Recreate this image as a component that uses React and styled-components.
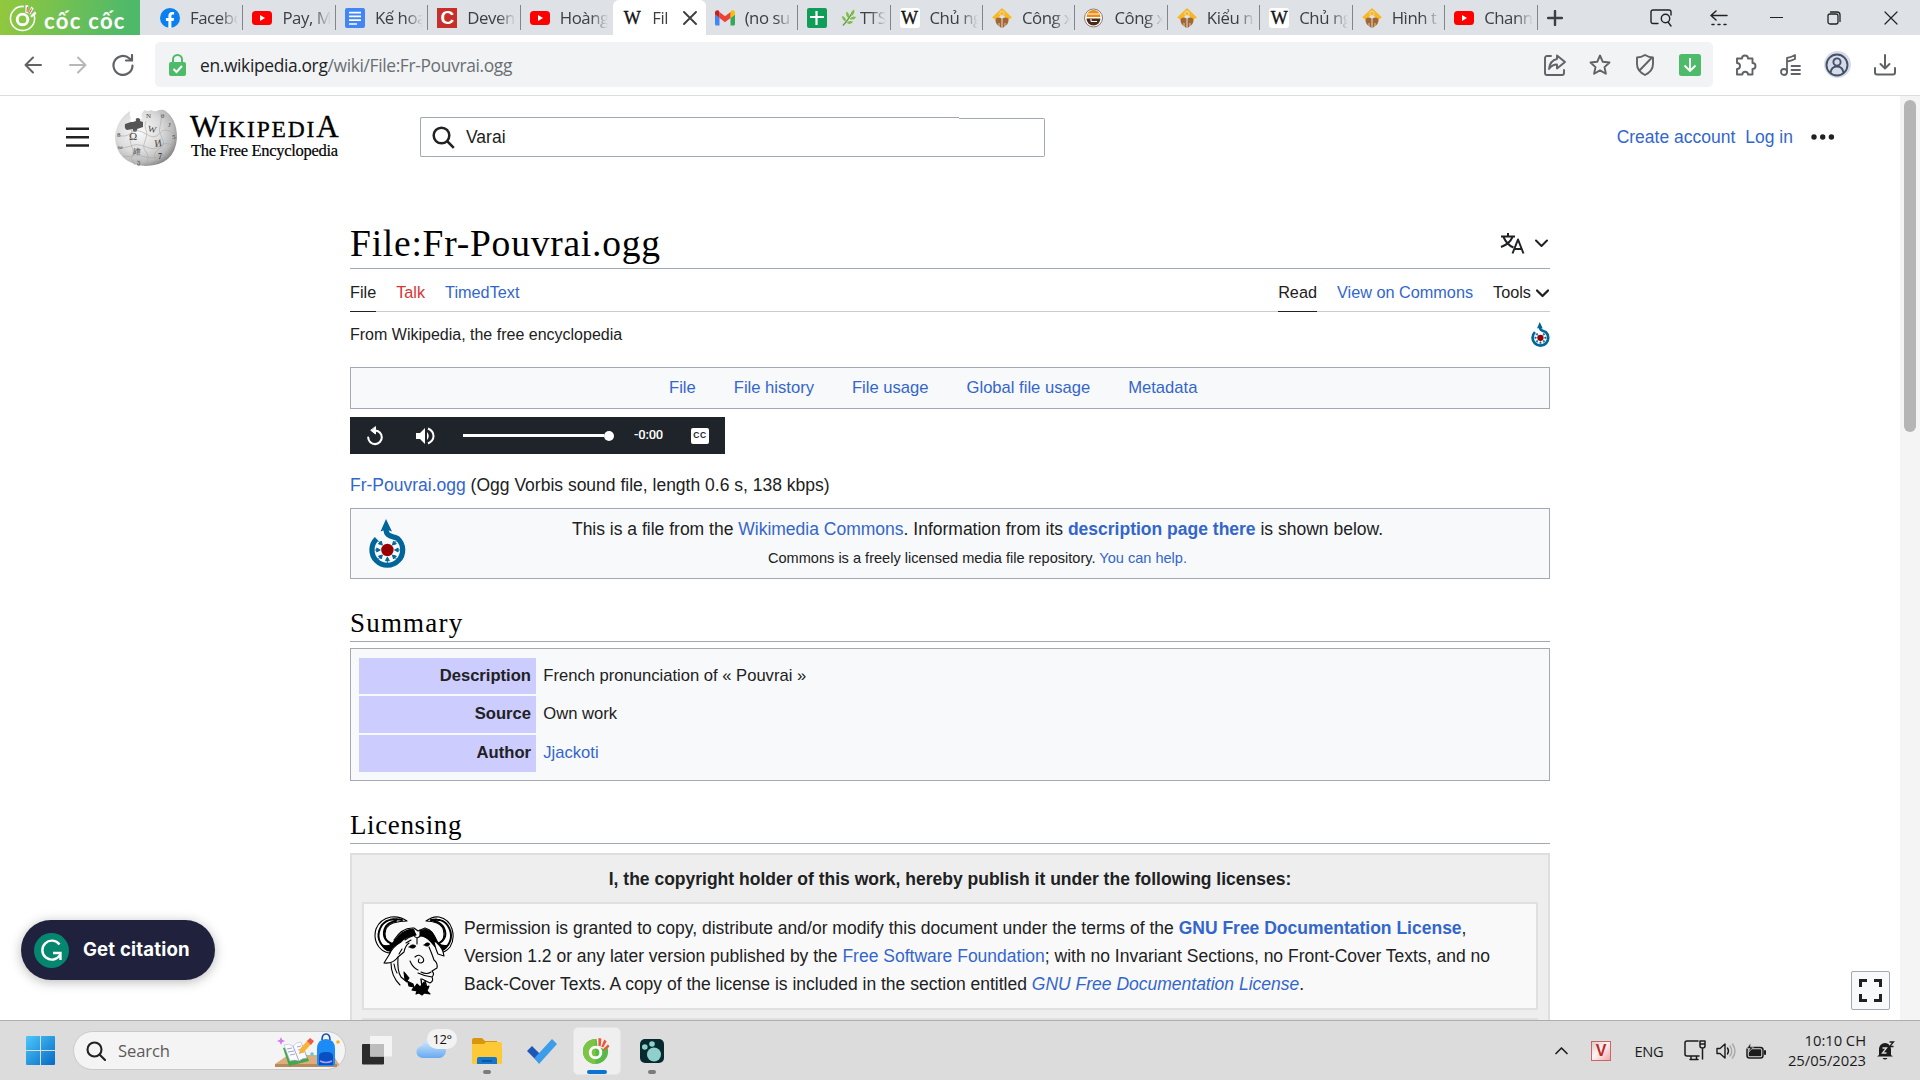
import React from "react";
import styled, { createGlobalStyle, css } from "styled-components";

const sans = `"Liberation Sans", Arial, sans-serif`;
const serif = `"Liberation Serif", Georgia, serif`;
const ui = `"Open Sans", "Noto Sans", sans-serif`;

const Global = createGlobalStyle`
  * { box-sizing: border-box; }
  html, body { margin: 0; padding: 0; background: #fff; overflow: hidden; }
  svg { display: block; flex: none; }
`;

const Screen = styled.div`
  width: 1920px;
  height: 1080px;
  display: flex;
  flex-direction: column;
  overflow: hidden;
  font-family: ${sans};
  color: #202122;
`;

/* ---------- browser chrome ---------- */
const TabStrip = styled.div`
  height: 35px;
  flex: none;
  display: flex;
  background: #dee1e6;
`;
const Brand = styled.div`
  width: 140px;
  display: flex;
  align-items: center;
  padding-left: 9px;
  gap: 6px;
  margin-right: 11px;
  background: linear-gradient(100deg, #93c83d 0%, #4fb96a 90%);
  color: #fff;
`;
const BrandName = styled.span`
  font: 700 22px/35px Lato, sans-serif;
  letter-spacing: 1.3px;
  padding-top: 5px;
  white-space: nowrap;
`;
const Tab = styled.div`
  width: 92.45px;
  flex: none;
  height: 35px;
  display: flex;
  align-items: center;
  padding: 0 4px 0 9px;
  position: relative;
  ${(p) =>
    p.$active &&
    css`
      background: #fff;
      border-radius: 6px 6px 0 0;
    `}
  &::after {
    content: "";
    display: ${(p) => (p.$line ? "block" : "none")};
    position: absolute;
    right: 0;
    top: 5px;
    width: 1px;
    height: 25px;
    background: #80868b;
  }
`;
const TabText = styled.span`
  margin-left: ${(p) => p.$ml || 10}px;
  flex: 1;
  min-width: 0;
  overflow: hidden;
  white-space: nowrap;
  font: 400 16.8px/35px ${ui};
  letter-spacing: -0.45px;
  color: #3c4043;
  display: flex;
  align-items: center;
  gap: 3px;
  -webkit-mask-image: linear-gradient(90deg, #000 62%, transparent 98%);
  mask-image: linear-gradient(90deg, #000 62%, transparent 98%);
`;
const WTile = styled.span`
  width: 20px;
  height: 20px;
  flex: none;
  border-radius: 3px;
  background: #fff;
  color: #111;
  font: 400 18px/21px ${serif};
  -webkit-text-stroke: 0.4px #111;
  display: flex;
  justify-content: center;
`;
const CTile = styled(WTile)`
  background: #c5302b;
  color: #fff;
  border-radius: 0;
  font: 700 19px/20px ${sans};
  -webkit-text-stroke: 0;
`;
const NewTab = styled.div`
  width: 34px;
  display: flex;
  align-items: center;
  justify-content: center;
`;
const WindowButtons = styled.div`
  margin-left: auto;
  display: flex;
`;
const Cell = styled.div`
  width: ${(p) => p.$w}px;
  flex: none;
  display: flex;
  align-items: center;
  justify-content: center;
`;
const Toolbar = styled.div`
  height: 61px;
  flex: none;
  display: flex;
  align-items: center;
  padding: 0 10px 1px 10px;
  border-bottom: 1px solid #dadce0;
  background: #fff;
`;
const AddressBar = styled.div`
  width: 1558px;
  height: 45px;
  margin: 0 10px 0 10px;
  display: flex;
  align-items: center;
  background: #f1f3f4;
  border-radius: 5px;
  padding: 0 1px 0 14px;
`;
const Url = styled.span`
  flex: 1;
  margin-left: 14px;
  padding-top: 1px;
  font: 400 17.4px/45px ${ui};
  letter-spacing: -0.35px;
  color: #6a6e73;
  white-space: nowrap;
  b { font-weight: 400; color: #202124; }
`;
const Avatar = styled.span`
  width: 27px;
  height: 27px;
  border-radius: 50%;
  background: #d5dbe8;
  display: flex;
  align-items: center;
  justify-content: center;
`;

/* ---------- wiki page ---------- */
const Viewport = styled.div`
  height: 924px;
  flex: none;
  display: flex;
  overflow: hidden;
  position: relative;
`;
const Page = styled.div`
  flex: 1;
  display: flex;
  flex-direction: column;
`;
const Scroll = styled.div`
  width: 20px;
  flex: none;
  background: #f4f4f4;
  padding: 4px 4px 0;
`;
const Thumb = styled.div`
  height: 332px;
  border-radius: 6px;
  background: #b5b5b5;
`;
const Header = styled.header`
  height: 82px;
  flex: none;
  display: flex;
  align-items: center;
  padding: 0 64px 0 66px;
`;
const GlobeWrap = styled.div`
  width: 88px;
  flex: none;
  padding-left: 26px;
`;
const Wordmark = styled.div`
  margin-left: 13px;
  width: 152px;
  font-family: ${serif};
  color: #000;
  white-space: nowrap;
`;
const Word = styled.div`
  height: 26px;
  font-size: 23.5px;
  line-height: 27px;
  letter-spacing: 1.85px;
  -webkit-text-stroke: 0.35px #000;
  span { font-size: 31px; letter-spacing: -0.8px; }
  span + span { letter-spacing: 0; }
`;
const Tagline = styled.div`
  font-size: 16.5px;
  line-height: 20px;
  letter-spacing: -0.3px;
  padding: 2px 0 0 1px;
  -webkit-text-stroke: 0.2px #000;
`;
const SearchForm = styled.div`
  display: flex;
  width: 625px;
  height: 40px;
  margin-left: 78px;
`;
const SearchInput = styled.div`
  width: 539px;
  display: flex;
  align-items: center;
  padding-left: 11px;
  gap: 11px;
  border: 1px solid #a2a9b1;
  border-right: 0;
  border-radius: 2px 0 0 2px;
  font-size: 17.5px;
`;
const SearchTail = styled.div`
  flex: 1;
  margin-top: 1px;
  border: 1px solid #a2a9b1;
  border-left: 0;
  border-radius: 0 2px 2px 0;
`;
const UserLinks = styled.div`
  margin-left: auto;
  display: flex;
  align-items: center;
  gap: 10px;
  font-size: 17.5px;
  svg { margin-left: 8px; }
`;
const A = styled.a`
  color: ${(p) => (p.$red ? "#d73333" : "#3366cc")};
  font-weight: ${(p) => (p.$bold ? 700 : 400)};
`;
const Article = styled.main`
  width: 1200px;
  margin-left: 350px;
  flex: none;
`;
const TitleRow = styled.div`
  margin-top: 41px;
  height: 50px;
  display: flex;
  justify-content: space-between;
  border-bottom: 1px solid #a2a9b1;
`;
const H1 = styled.h1`
  margin: 0;
  font: 400 37.5px/49px ${serif};
  letter-spacing: 0.77px;
  color: #000;
`;
const Lang = styled.div`
  display: flex;
  align-items: center;
  gap: 10px;
  padding-right: 2px;
`;
const PageTabs = styled.nav`
  height: 43px;
  display: flex;
  gap: 20px;
  border-bottom: 1px solid #c8ccd1;
`;
const PageTab = styled.div`
  height: 43px;
  font-size: 16.25px;
  line-height: 46px;
  border-bottom: 1px solid ${(p) => (p.$on ? "#202122" : "transparent")};
  margin-left: ${(p) => (p.$push ? "auto" : "0")};
  display: flex;
  align-items: flex-start;
  gap: 5px;
  svg { margin: 20px 1px 0 0; }
`;
const SubRow = styled.div`
  height: 45px;
  display: flex;
  align-items: center;
  justify-content: space-between;
  font-size: 16px;
`;
const Toc = styled.div`
  margin-top: 10px;
  height: 42px;
  display: flex;
  gap: 38px;
  padding-left: 318px;
  line-height: 39px;
  font-size: 16.6px;
  border: 1px solid #a2a9b1;
  background: #f8f9fa;
`;
const Player = styled.div`
  margin-top: 8px;
  width: 375px;
  height: 37px;
  display: flex;
  align-items: center;
  padding-left: 16px;
  background: #1e242a;
  color: #fff;
`;
const VolumeButton = styled.div`
  width: 79px;
  flex: none;
  padding-left: 31px;
`;
const Track = styled.div`
  width: 151px;
  height: 10px;
  display: flex;
  align-items: center;
`;
const Bar = styled.div`
  flex: 1;
  height: 3px;
  background: #fff;
`;
const Knob = styled.div`
  width: 10px;
  height: 10px;
  border-radius: 50%;
  background: #fff;
`;
const Time = styled.span`
  margin-left: 20px;
  width: 57px;
  font: 500 13px/36px Roboto, ${sans};
  letter-spacing: -0.2px;
  padding-bottom: 1px;
`;
const CC = styled.span`
  width: 18px;
  height: 16px;
  border-radius: 2px;
  background: #fff;
  color: #1e242a;
  font: 700 8.5px/15px ${sans};
  letter-spacing: 0.6px;
  text-align: center;
  text-transform: uppercase;
`;
const FileLine = styled.div`
  margin-top: 17px;
  font-size: 17.5px;
  line-height: 28px;
`;
const CommonsBox = styled.div`
  margin-top: 9px;
  height: 71px;
  display: flex;
  border: 1px solid #a2a9b1;
  background: #f8f9fa;
  svg { margin: 10px 0 0 18px; }
`;
const CommonsText = styled.div`
  flex: 1;
  padding-top: 6px;
  text-align: center;
  font-size: 17.5px;
  line-height: 28px;
  small { display: block; font-size: 14.57px; line-height: 31px; }
`;
const H2 = styled.h2`
  margin: 26px 0 0;
  height: 37px;
  border-bottom: 1px solid #a2a9b1;
  font: 400 27px/37px ${serif};
  letter-spacing: ${(p) => p.$ls}px;
  color: #000;
`;
const Info = styled.div`
  margin-top: 6px;
  height: 133px;
  padding: 9px 8px;
  display: grid;
  grid-template-columns: 177px 1fr;
  grid-template-rows: 36px 37px 37px;
  row-gap: 2px;
  border: 1px solid #a2a9b1;
  background: #f8f9fa;
  font-size: 16.6px;
  line-height: 35px;
`;
const Label = styled.div`
  background: #ccccff;
  font-weight: 700;
  text-align: right;
  padding-right: 5px;
`;
const Value = styled.div`
  padding-left: 7.3px;
`;
const License = styled.div`
  margin-top: 9px;
  padding: 10px 10px 0;
  border: 2px solid #dedede;
  background: #eeeeee;
  font-size: 17.5px;
  line-height: 28px;
`;
const LicenseTitle = styled.div`
  font-weight: 700;
  text-align: center;
`;
const LicenseCard = styled.div`
  margin-top: ${(p) => p.$mt}px;
  height: 108px;
  display: flex;
  border: 2px solid #e0e0e0;
  background: #f9f9f9;
  padding: 10px;
  white-space: nowrap;
  svg { margin: 2px 10px 0 0; }
`;
const Citation = styled.button`
  position: absolute;
  left: 21px;
  top: 824px;
  width: 194px;
  height: 60px;
  padding: 0 0 0 13px;
  border: 0;
  border-radius: 30px;
  display: flex;
  align-items: center;
  gap: 14px;
  background: #20223d;
  color: #fff;
  font: 700 18.6px Inter, sans-serif;
  letter-spacing: 0.17px;
  white-space: nowrap;
  box-shadow: 0 2px 12px rgba(0, 0, 0, 0.28);
  span { padding-bottom: 2px; }
`;
const FullBtn = styled.button`
  position: absolute;
  left: 1851px;
  top: 875px;
  width: 39px;
  height: 39px;
  padding: 0;
  display: flex;
  align-items: center;
  justify-content: center;
  border: 1px solid #a2a9b1;
  border-radius: 2px;
  background: #f8f9fa;
`;

/* ---------- taskbar ---------- */
const Taskbar = styled.footer`
  height: 60px;
  flex: none;
  display: flex;
  align-items: center;
  border-top: 1px solid #adadad;
  background: #dcdcdc;
  padding: 0 14px 0 13px;
  font-family: ${ui};
  color: #1b1b1b;
`;
const SearchPill = styled.div`
  width: 273px;
  height: 39px;
  margin: 0 3px 0 5px;
  padding: 0 4px 0 12px;
  border-radius: 20px;
  border: 1px solid #c9c9c9;
  background: #f4f4f4;
  display: flex;
  align-items: center;
  font-size: 16.6px;
  letter-spacing: -0.1px;
  color: #5b5b5b;
  span { margin-left: 12px; flex: 1; }
`;
const AppCell = styled.div`
  width: 55px;
  height: 59px;
  flex: none;
  display: flex;
  align-items: center;
  justify-content: center;
  position: relative;
  &::after {
    content: "";
    display: ${(p) => (p.$mark ? "block" : "none")};
    position: absolute;
    bottom: 6px;
    width: ${(p) => (p.$mark === "on" ? 20 : 8)}px;
    height: 4px;
    border-radius: 2px;
    background: ${(p) => (p.$mark === "on" ? "#0a74d1" : "#7c7c7c")};
  }
`;
const ActiveTile = styled.div`
  width: 48px;
  height: 48px;
  border-radius: 5px;
  border: 1px solid #e6e6e6;
  background: #efefef;
  display: flex;
  align-items: center;
  justify-content: center;
`;
const TempBadge = styled.span`
  position: absolute;
  left: 23px;
  top: 8px;
  width: 30px;
  height: 20px;
  border-radius: 10px;
  background: #f2f2f2;
  font-size: 13px;
  letter-spacing: -0.4px;
  line-height: 20px;
  text-align: center;
  color: #111;
`;
const Tray = styled.div`
  margin-left: auto;
  display: flex;
  align-items: center;
  height: 59px;
`;
const Lng = styled.span`
  font-size: 14.7px;
  letter-spacing: -0.3px;
`;
const Clock = styled.div`
  width: 93px;
  font-size: 14.8px;
  line-height: 20px;
  letter-spacing: -0.05px;
  text-align: right;
  white-space: nowrap;
  padding-bottom: 1px;
`;
const VTile = styled.span`
  width: 20px;
  height: 20px;
  border: 1px solid #c66;
  background: linear-gradient(135deg, #d5cccc, #fff4f4 45%, #f0a9a9);
  color: #c02828;
  font: 700 16px/18px ${sans};
  text-align: center;
`;

/* ---------- drawings ---------- */
const Line = ({ w, h = w, vb, c = "#5f6368", sw = 1.8, children }) => (
  <svg width={w} height={h} viewBox={vb || `0 0 ${w} ${h}`} fill="none" stroke={c} strokeWidth={sw} strokeLinecap="round" strokeLinejoin="round">
    {children}
  </svg>
);

const YouTube = () => (
  <svg width="20" height="20" viewBox="0 0 20 20">
    <rect y="3" width="20" height="14" rx="3.5" fill="#f00" />
    <path d="M8 7l5 3-5 3z" fill="#fff" />
  </svg>
);
const Facebook = () => (
  <svg width="20" height="20" viewBox="0 0 20 20">
    <circle cx="10" cy="10" r="10" fill="#0a80f0" />
    <path d="M8.4 19.9v-7H5.9V10h2.5V7.8c0-2.5 1.5-3.9 3.8-3.9.9 0 1.9.2 1.9.2v2.4h-1.2c-1.2 0-1.5.7-1.5 1.5v2h2.6l-.4 2.900h-2.200v7z" fill="#fff" />
  </svg>
);
const Docs = () => (
  <svg width="20" height="20" viewBox="0 0 20 20">
    <rect width="20" height="20" rx="2" fill="#4285f4" />
    <path d="M4 4.600h12M4 8.400h12M4 12.200h12M4 16h8" stroke="#fff" strokeWidth="1.700" />
  </svg>
);
const Sheets = () => (
  <svg width="20" height="20" viewBox="0 0 20 20">
    <rect width="20" height="20" rx="2" fill="#0f9d58" />
    <path d="M9.500 3v14M3 9h14" stroke="#fff" strokeWidth="2.200" />
  </svg>
);
const Gmail = () => (
  <svg width="20" height="16" viewBox="0 0 20 16">
    <path d="M1.500 15.500H4.500V8L0 4.500V14a1.500 1.500 0 001.500 1.500z" fill="#4285f4" />
    <path d="M15.500 15.500h3A1.500 1.500 0 0020 14V4.500L15.500 8z" fill="#34a853" />
    <path d="M15.500 2v6L20 4.500V2.600C20 .6 17.800-.4 16.300.8z" fill="#fbbc04" />
    <path d="M4.500 8V2L10 6.200 15.500 2v6L10 12.200z" fill="#ea4335" />
    <path d="M0 2.600v1.900L4.500 8V2L3.700.8C2.200-.4 0 .6 0 2.600z" fill="#c5221f" />
  </svg>
);
const Gold = () => (
  <svg width="20" height="20" viewBox="0 0 20 20">
    <path d="M10 0l10 9.500-3.500 2L10 6.500l-6.500 5L0 9.500z" fill="#f9b81f" />
    <circle cx="10" cy="5.500" r="2.200" fill="#f9b81f" stroke="#dee1e6" strokeWidth=".8" />
    <path d="M9.500 10.500V20C5 17.500 3 14.500 3.500 11q3-2.500 6-.5zM10.500 10.500V20c4.500-2.500 6.500-5.500 6-9q-3-2.500-6-.5z" fill="#a4672f" />
    <path d="M7 15v4M13 15v4" stroke="#dee1e6" strokeWidth=".8" />
  </svg>
);
const Coffee = () => (
  <svg width="20" height="20" viewBox="0 0 20 20">
    <circle cx="9.500" cy="10" r="9" fill="#fff" stroke="#8a7a6c" />
    <path d="M2.500 9a7 7 0 0114 0z" fill="#f08c13" />
    <path d="M2.500 10.500h14a7 7 0 01-14 0z" fill="#4a2b1b" />
    <path d="M3.500 6h12M7 13.500h6M7 11v2.500" stroke="#fff" strokeWidth="1.100" />
  </svg>
);
const Leaf = () => (
  <svg width="16" height="18" viewBox="0 0 17 18">
    <path d="M2 17Q7 12 12 3" stroke="#5d9c3a" strokeWidth="1.300" fill="none" />
    <path d="M11 7Q10 2 14 0q1 5-3 7zM8 9Q4 6 6 2q4 3 2 7zM5 13Q1 11 1 7q5 1 4 6zM9 10q3-4 7-2-2 4-7 2zM6 14q3-3 7-1-3 4-7 1z" fill="#7cc043" />
  </svg>
);
const CocCoc = ({ s = 30, white }) => (
  <svg width={s} height={s} viewBox="0 0 30 30">
    {white ? (
      <circle cx="14" cy="16" r="12.500" fill="none" stroke="#fff" strokeWidth="1.600" />
    ) : (
      <circle cx="14" cy="16" r="13" fill="#58b947" />
    )}
    {!white && <path d="M14 3a13 13 0 000 26z" fill="#7cc544" />}
    <path d="M16 11L15 1l6 2 6 5-3 6z" fill={white ? "#7cc653" : "#efefef"} />
    <circle cx="14" cy="17" r="5.500" fill="none" stroke="#fff" strokeWidth="3" />
    <path d="M17 10V2l3 .7-.6 8zM20 11l3-7.500 2.500 2-3.500 6.500zM22 13.500l5-5 1.300 2.500-5 4z" fill={white ? "#fff" : "#f0553a"} />
    {white && <path d="M18 9l.6-5 1 .2-.4 5zM20.500 10.500l2.500-5 .8.6-2.500 5.200z" fill="#f0553a" />}
  </svg>
);

const Globe = () => (
  <svg width="62" height="57" viewBox="0 0 62 57">
    <defs>
      <radialGradient id="globe" cx=".38" cy=".38" r=".66">
        <stop offset="0" stopColor="#fbfbfb" />
        <stop offset=".55" stopColor="#dcdcdc" />
        <stop offset=".85" stopColor="#b9b9b9" />
        <stop offset="1" stopColor="#8a8a8a" />
      </radialGradient>
    </defs>
    <path d="M15 2q-1 4 1 7l-1 3q2 2 5 0l3-2q3 1 4-1-2-5 3-8 3 2 6 0 3 2 6 1 3-2 7-1Q62 9 62 29 60 56 31 57 2 55 0 29 1 11 15 2z" fill="url(#globe)" />
    <path d="M10 15l6-2h2l3-1q-1-3 2-3 3 1 2 3l3 1v5l-6 2q1 2-2 3-3-1-2-3l-6 1q-3-1-2-6z" fill="#555" />
    <path d="M16 20q2 3 0 7t1 11-1 11l4 7M31 12q-2 5 0 9t-1 11 1 11 0 13M46 4q1 8-1 13t2 12-3 11-3 12M3 26q7 3 13-2t15 1 14-1 16 2M2 38q8 2 14-1t15 1 14-1 14 0M8 47q6 1 10 0t13 1 12-1 9 0" fill="none" stroke="#a8a8a8" strokeWidth=".6" />
    <g fontFamily="Liberation Serif, serif" fill="#444" fontSize="10">
      <text x="14" y="31" fontSize="11">Ω</text>
      <text x="33" y="23" fontSize="9" transform="rotate(10 36 20)">W</text>
      <text x="40" y="38" transform="rotate(-8 40 38)">И</text>
      <text x="18" y="45" fontSize="8">維</text>
      <text x="43" y="50" fontSize="8" fontWeight="bold">7</text>
      <text x="31" y="9" fontSize="7">N</text>
      <text x="46" y="9" fontSize="7">θ</text>
      <text x="53" y="18" fontSize="7">J</text>
      <text x="2" y="28" fontSize="7">8</text>
      <text x="3" y="40" fontSize="7">ω</text>
      <text x="57" y="30" fontSize="7">5</text>
      <text x="22" y="55" fontSize="6">უ</text>
    </g>
  </svg>
);

const Commons = ({ w, h }) => (
  <svg width={w} height={h} viewBox="0 0 37 49">
    <path d="M17 10C17 18 23 17 28.800 19.600A15.400 15.400 0 1 1 7.600 19.800" fill="none" stroke="#069" strokeWidth="5.200" />
    <path d="M17 0l6 12.500q-6-2.500-11.500 0z" fill="#069" />
    <circle cx="18.400" cy="31" r="6.200" fill="#900" />
    {[45, 90, 135, 180, 225, 270, 315].map((a) => (
      <path key={a} d="M18.400 18v3.500M16.400 20.300h4l-2 3.600z" transform={`rotate(${a} 18.400 31)`} fill="#069" stroke="#069" strokeWidth=".9" />
    ))}
  </svg>
);

const Gnu = () => (
  <svg width="80" height="80" viewBox="0 0 80 80" fill="none" stroke="#000" strokeWidth="1.100" strokeLinejoin="round" strokeLinecap="round">
    <path d="M33 5Q26 0 17 1 6 3 2 13-1 23 5 31q4 5 10 6l5-8Q11 26 11 18q0-8 8-11 7-2 14-2z" fill="#fff" />
    <path d="M28 4Q15 1 8 9 1 20 8 29q4 5 8 5l3-6Q9 25 10 16q1-9 12-11" strokeWidth="2" strokeDasharray="2.500 .5" />
    <path d="M52 5Q59 0 65 1q10 2 13 12 3 10-2 18-4 5-10 6l-4-8q8-3 8-11 0-8-7-11-5-2-11-2z" fill="#fff" />
    <path d="M57 4q12-2 17 6 6 10 0 19-4 5-8 5l-3-6q10-4 8-13-2-8-11-10" strokeWidth="2" strokeDasharray="2.500 .5" />
    <path d="M8 29Q16 32 21 24q7-10 18-11l3 6Q32 20 27 26l-10 6-3 3q-4-2-6-6z" fill="#000" />
    <path d="M46 15q9-5 15 6l3 6q5 4 10 2-3 6-9 6-4-4-8-9-5-6-11-6z" fill="#000" />
    <path d="M20 24q8-13 20-12l4 3 7-3q9 2 11 14" />
    <path d="M27 26Q18 31 15 39l-5 8q9 1 14-6l6-5q1-6 5-9" fill="#fff" />
    <path d="M60 26q2 8 4 12l6 2q-1-8-7-13" fill="#fff" />
    <path d="M31 24q4-3 10-5M40 14q-2 6 3 8 6-2 3-8M43 22v6M32 27l5-3" />
    <path d="M24 41q-1 14 3 20l6 5M55 31q3 7 5 13 4 3 3 8l-5 3q3 3 0 6-8-1-14-4M36 45q3 7 8 9M58 61q2 4-2 6l-8-4" />
    <path d="M41 41q4-4 8 1 2 4-2 5-4 0-2-4M17 47q0 13 9 22M20 48q1 6 3 9M57 56q-4 3-10 0M28 33l-3 5" />
    <path d="M35 31q3-4 7-1-2 4-7 1zM50 29q3-4 6-1-2 4-6 1z" fill="#000" strokeWidth=".6" />
    <path d="M30 56l5 6-2 3 6 3 1 4 3-4 3 3 4-5 2 5 3-1-2 5 3 3-6-1-2 2-3-2-3 1 1-3-5-1 2-3-5-1-1-4-3-2z" fill="#000" />
    <path d="M47 63l1 8M51 65l2 7" strokeWidth="1.400" />
  </svg>
);

const SchoolArt = () => (
  <svg width="66" height="35" viewBox="0 0 66 35">
    <path d="M0 31L13 22h45l6 9v2H0z" fill="#dcae7d" />
    <path d="M0 31h62v3H0z" fill="#b98a5c" />
    <path d="M8 15l19-4 7 17-20 5z" fill="#46a64c" />
    <path d="M9 12q5-2 9 1 3-4 8-4l6 16q-5 0-8 3-4-2-9 0z" fill="#fafaff" stroke="#b5b8d8" strokeWidth=".6" />
    <path d="M18 13l6 15M12 16l5-1M13 19l6-1M15 22l5-1M22 14l4-1M23 17l5-1M24 20l5-1" stroke="#8d91bd" strokeWidth=".8" />
    <path d="M24 21l1-5 8-9 4 3-8 9z" fill="#f9b233" />
    <path d="M32 8l3-3 4 3-3 4z" fill="#ec5b4a" />
    <path d="M42 16Q42 6 51 6t9 10v14q0 3-3 3H45q-3 0-3-3z" fill="#1c8bf5" />
    <path d="M47 7q0-6 4-6t4 6" fill="none" stroke="#124fb3" strokeWidth="1.600" />
    <path d="M44 23q0-4 7-4t7 4v9H44z" fill="#0a4fc0" />
    <path d="M45 28q6 3 12 0" stroke="#b39cff" fill="none" strokeWidth="1.400" />
    <path d="M6 4l1.200 2.800L10 8 7.200 9.200 6 12 4.800 9.200 2 8l2.800-1.200z" fill="#d77bf0" />
    <circle cx="63" cy="9" r="1.800" fill="#f6b21a" />
    <circle cx="37" cy="21" r="1.800" fill="#57c9e8" />
  </svg>
);

const Chevron = ({ w = 13, up, sw = 2 }) => (
  <Line w={w} h={9} vb="0 0 13 9" c="#202122" sw={sw}>
    <path d={up ? "M1 7.500l5.500-5.500L12 7.500" : "M1 1.500L6.500 7 12 1.500"} />
  </Line>
);

const tabs = [
  { icon: <Facebook />, text: "Facebo", line: true },
  { icon: <YouTube />, text: "Pay, M", line: true },
  { icon: <Docs />, text: "Kế hoạ", line: true },
  { icon: <CTile>C</CTile>, text: "Deven", line: true },
  { icon: <YouTube />, text: "Hoàng" },
  { icon: <WTile>W</WTile>, text: "Fil", active: true },
  { icon: <Gmail />, text: "(no su", line: true },
  { icon: <Sheets />, text: "TTS", leaf: true, line: true },
  { icon: <WTile>W</WTile>, text: "Chủ ng", line: true },
  { icon: <Gold />, text: "Công x", line: true },
  { icon: <Coffee />, text: "Công x", line: true },
  { icon: <Gold />, text: "Kiểu n", line: true },
  { icon: <WTile>W</WTile>, text: "Chủ ng", line: true },
  { icon: <Gold />, text: "Hình t", line: true },
  { icon: <YouTube />, text: "Chann", line: true },
];

const BrowserChrome = () => (
  <>
    <TabStrip>
      <Brand>
        <CocCoc s={29} white />
        <BrandName>cốc cốc</BrandName>
      </Brand>
      {tabs.map((t, i) => (
        <Tab key={i} $active={t.active} $line={t.line}>
          {t.icon}
          <TabText $ml={t.leaf ? 14 : 10}>
            {t.leaf && <Leaf />}
            {t.text}
          </TabText>
          {t.active && (
            <Line w={22} h={14} c="#3c4043" sw={1.9}>
              <path d="M4 1l12 12M16 1L4 13" />
            </Line>
          )}
        </Tab>
      ))}
      <NewTab>
        <Line w={16} c="#3c4043" sw={2.4}>
          <path d="M8 1v14M1 8h14" />
        </Line>
      </NewTab>
      <WindowButtons>
        <Cell $w={57.5}>
          <Line w={22} h={18} c="#222" sw={1.4}>
            <path d="M8 14.500H3a2 2 0 01-2-2V3a2 2 0 012-2h16a2 2 0 012 2v3M18 13l3 4" />
            <circle cx="15.500" cy="9.500" r="4.200" />
          </Line>
        </Cell>
        <Cell $w={57.5}>
          <Line w={18} h={16} c="#222" sw={1.5}>
            <path d="M6 1L1 5.500 6 10M1 5.500h16M2 14.500h2M8 14.500h2M14 14.500h2" />
          </Line>
        </Cell>
        <Cell $w={57.5}>
          <Line w={13} c="#222" sw={1.2}><path d="M0 6.500h13" /></Line>
        </Cell>
        <Cell $w={57.5}>
          <Line w={14} c="#222" sw={1.3}>
            <rect x="1" y="3" width="10" height="10" rx="2" />
            <path d="M3.500 1H10a3 3 0 013 3v6.500" />
          </Line>
        </Cell>
        <Cell $w={57.5}>
          <Line w={14} c="#222" sw={1.2}><path d="M1 1l12 12M13 1L1 13" /></Line>
        </Cell>
      </WindowButtons>
    </TabStrip>
    <Toolbar>
      <Cell $w={45}>
        <Line w={18} sw={2}><path d="M17 9H1.500M9 1.500L1.500 9 9 16.500" /></Line>
      </Cell>
      <Cell $w={45}>
        <Line w={18} c="#b6b8bb" sw={2}><path d="M1 9h15.500M9 1.500L16.500 9 9 16.500" /></Line>
      </Cell>
      <Cell $w={45}>
        <Line w={22} sw={2.2}>
          <path d="M20.500 11.500A9.500 9.500 0 1 1 17.500 4.500L20 6.500M20 1v5.500h-6" />
        </Line>
      </Cell>
      <AddressBar>
        <svg width="17" height="22" viewBox="0 0 17 22">
          <path d="M4 9V5.500a4.500 4.500 0 019 0V9" fill="none" stroke="#4dbb6a" strokeWidth="2" />
          <rect y="8" width="17" height="14" rx="2" fill="#4dbb6a" />
          <path d="M4.500 15l3 3 5.500-6" fill="none" stroke="#fff" strokeWidth="2" />
        </svg>
        <Url><b>en.wikipedia.org</b>/wiki/File:Fr-Pouvrai.ogg</Url>
        <Cell $w={45}>
          <Line w={22} sw={1.9}>
            <path d="M7 2H3a2 2 0 00-2 2v15a2 2 0 002 2h15a2 2 0 002-2v-3" />
            <path d="M13 1.500l8 6.500-8 6.500v-4q-5 0-8 4.500 1-8.500 8-10z" />
          </Line>
        </Cell>
        <Cell $w={45}>
          <Line w={22} sw={1.9}>
            <path d="M11 1.500l2.800 6.300 6.700.7-5 4.600 1.400 6.700L11 16.400l-5.900 3.400 1.400-6.700-5-4.600 6.700-.7z" />
          </Line>
        </Cell>
        <Cell $w={45}>
          <Line w={18} h={22} sw={1.9}>
            <path d="M9 1q4 2.500 8 2.500V10q0 7-8 11Q1 17 1 10V3.500Q5 3.500 9 1zM15 4.500L3.500 16.500" />
          </Line>
        </Cell>
        <Cell $w={45}>
          <svg width="22" height="22" viewBox="0 0 22 22">
            <rect width="22" height="22" rx="2.500" fill="#4dbb6a" />
            <path d="M11 4v13M5.500 11.500L11 17l5.500-5.500" fill="none" stroke="#fff" strokeWidth="1.900" />
          </svg>
        </Cell>
      </AddressBar>
      <Cell $w={45}>
        <Line w={22} sw={1.9}>
          <path d="M7 4.500a3 3 0 016 0H17.500V9a3 3 0 010 6v5.500H13a2.800 2.800 0 00-5.600 0H2V15a3 3 0 000-6V4.500z" />
        </Line>
      </Cell>
      <Cell $w={45}>
        <Line w={22} sw={1.8}>
          <circle cx="4" cy="18" r="3" />
          <path d="M7 18V4q5-1 8-3v4q-4 2-8 2.500M11.500 12H20M11.500 16H20M11.500 20H20" />
        </Line>
      </Cell>
      <Cell $w={48}>
        <Avatar>
          <Line w={24} c="#454f66" sw={1.9}>
            <circle cx="12" cy="12" r="10.500" />
            <circle cx="12" cy="9" r="3.600" />
            <path d="M5.500 19.500q1-6 6.500-6t6.500 6" />
          </Line>
        </Avatar>
      </Cell>
      <Cell $w={48}>
        <Line w={22} sw={2}>
          <path d="M11 1v13M6.500 10l4.500 4.500 4.500-4.500M1 14v4.500a2 2 0 002 2h16a2 2 0 002-2V14" />
        </Line>
      </Cell>
    </Toolbar>
  </>
);

const WikiPage = () => (
  <Viewport>
    <Page>
      <Header>
        <Line w={23} h={20} c="#202122" sw={2.4}>
          <path d="M0 1.800h23M0 10.200h23M0 18.500h23" strokeLinecap="butt" />
        </Line>
        <GlobeWrap><Globe /></GlobeWrap>
        <Wordmark>
          <Word><span>W</span>IKIPEDI<span>A</span></Word>
          <Tagline>The Free Encyclopedia</Tagline>
        </Wordmark>
        <SearchForm>
          <SearchInput>
            <Line w={23} c="#202122" sw={2.5}>
              <circle cx="9.500" cy="9.500" r="7.800" />
              <path d="M15.500 15.500l6.300 6.300" strokeLinecap="butt" />
            </Line>
            Varai
          </SearchInput>
          <SearchTail />
        </SearchForm>
        <UserLinks>
          <A>Create account</A>
          <A>Log in</A>
          <svg width="25" height="6" viewBox="0 0 25 6" fill="#202122">
            <circle cx="3" cy="3" r="2.700" />
            <circle cx="11.700" cy="3" r="2.700" />
            <circle cx="20.400" cy="3" r="2.700" />
          </svg>
        </UserLinks>
      </Header>
      <Article>
        <TitleRow>
          <H1>File:Fr-Pouvrai.ogg</H1>
          <Lang>
            <Line w={25} h={21} c="#202122" sw={2}>
              <path d="M1 3.500h14M8 0v3M3.500 4Q7 12 13.500 14.500M12.500 4Q9.500 11 1 14" strokeLinecap="butt" />
              <path d="M12.500 20.500l5.500-14 5.500 14M14.500 16h7" strokeLinecap="butt" />
            </Line>
            <Chevron />
          </Lang>
        </TitleRow>
        <PageTabs>
          <PageTab $on>File</PageTab>
          <PageTab><A $red>Talk</A></PageTab>
          <PageTab><A>TimedText</A></PageTab>
          <PageTab $on $push>Read</PageTab>
          <PageTab><A>View on Commons</A></PageTab>
          <PageTab>Tools<Chevron sw={2.3} /></PageTab>
        </PageTabs>
        <SubRow>
          From Wikipedia, the free encyclopedia
          <Commons w={19} h={25} />
        </SubRow>
        <Toc>
          <A>File</A>
          <A>File history</A>
          <A>File usage</A>
          <A>Global file usage</A>
          <A>Metadata</A>
        </Toc>
        <Player>
          <Line w={18} h={20} c="#fff" sw={2.1}>
            <path d="M9 4.500a6.800 6.800 0 11-6.800 7" />
            <path d="M9.500 1v7L5 4.500z" fill="#fff" strokeWidth="1" />
          </Line>
          <VolumeButton>
            <svg width="20" height="18" viewBox="0 0 20 18">
              <path d="M1 6h4l5-5v16l-5-5H1z" fill="#fff" />
              <path d="M12 5q3.500 4 0 8z" fill="#fff" />
              <path d="M13 1.500q5.500 2.500 5.500 7.500T13 16.500" fill="none" stroke="#fff" strokeWidth="2" />
            </svg>
          </VolumeButton>
          <Track>
            <Bar />
            <Knob />
          </Track>
          <Time>-0:00</Time>
          <CC>cc</CC>
        </Player>
        <FileLine><A>Fr-Pouvrai.ogg</A> (Ogg Vorbis sound file, length 0.6 s, 138 kbps)</FileLine>
        <CommonsBox>
          <Commons w={37} h={49} />
          <CommonsText>
            This is a file from the <A>Wikimedia Commons</A>. Information from its <A $bold>description page there</A> is shown below.
            <small>Commons is a freely licensed media file repository. <A>You can help.</A></small>
          </CommonsText>
        </CommonsBox>
        <H2 $ls={1.2}>Summary</H2>
        <Info>
          <Label>Description</Label>
          <Value>French pronunciation of « Pouvrai »</Value>
          <Label>Source</Label>
          <Value>Own work</Value>
          <Label>Author</Label>
          <Value><A>Jjackoti</A></Value>
        </Info>
        <H2 $ls={0.62}>Licensing</H2>
        <License>
          <LicenseTitle>I, the copyright holder of this work, hereby publish it under the following licenses:</LicenseTitle>
          <LicenseCard $mt={9}>
            <Gnu />
            <div>
              Permission is granted to copy, distribute and/or modify this document under the terms of the <A $bold>GNU Free Documentation License</A>,<br />
              Version 1.2 or any later version published by the <A>Free Software Foundation</A>; with no Invariant Sections, no Front-Cover Texts, and no<br />
              Back-Cover Texts. A copy of the license is included in the section entitled <i><A>GNU Free Documentation License</A></i>.
            </div>
          </LicenseCard>
          <LicenseCard $mt={8} />
        </License>
      </Article>
    </Page>
    <Scroll><Thumb /></Scroll>
    <Citation>
      <svg width="35" height="35" viewBox="0 0 35 35">
        <circle cx="17.500" cy="17.500" r="17.500" fill="#04866f" />
        <path d="M25.500 11.500A9.500 9.500 0 1 0 26 22M19 20h7.500v7" fill="none" stroke="#fff" strokeWidth="2.400" />
      </svg>
      <span>Get citation</span>
    </Citation>
    <FullBtn>
      <Line w={23} c="#202122" sw={3}>
        <path d="M1.500 8V1.500H8M15 1.500h6.500V8M21.500 15v6.500H15M8 21.500H1.500V15" strokeLinecap="butt" strokeLinejoin="miter" />
      </Line>
    </FullBtn>
  </Viewport>
);

const TaskbarView = () => (
  <Taskbar>
    <Cell $w={55}>
      <svg width="29" height="29" viewBox="0 0 29 29">
        <defs>
          <linearGradient id="win" x1="0" y1="0" x2="29" y2="29" gradientUnits="userSpaceOnUse">
            <stop offset="0" stopColor="#4cc8fb" />
            <stop offset="1" stopColor="#0669c4" />
          </linearGradient>
        </defs>
        <path d="M0 1q0-1 1-1h13v14H0zM15 0h13q1 0 1 1v13H15zM0 15h14v14H1q-1 0-1-1zM15 15h14v13q0 1-1 1H15z" fill="url(#win)" />
      </svg>
    </Cell>
    <SearchPill>
      <Line w={20} c="#222" sw={2.1}>
        <circle cx="8.500" cy="8.500" r="7" />
        <path d="M13.500 13.500l5.500 5.500" />
      </Line>
      <span>Search</span>
      <SchoolArt />
    </SearchPill>
    <AppCell>
      <svg width="30" height="29" viewBox="0 0 30 29">
        <rect y="8" width="22" height="20.500" rx="1" fill="#2b2b2b" />
        <rect x="8" width="22" height="20.500" rx="1" fill="#f4f4f4" />
        <rect x="8" y="8" width="14" height="12.500" fill="#bdbdbd" />
      </svg>
    </AppCell>
    <AppCell>
      <svg width="31" height="30" viewBox="0 0 31 30">
        <defs>
          <linearGradient id="cloud" x1="0" y1="0" x2="0" y2="1">
            <stop offset="0" stopColor="#d3e9fc" />
            <stop offset="1" stopColor="#66aaf0" />
          </linearGradient>
        </defs>
        <path d="M7 22a6 6 0 01-1-12A8.500 8.500 0 0121 7.500 7.300 7.300 0 0124 22z" fill="url(#cloud)" />
      </svg>
      <TempBadge>12°</TempBadge>
    </AppCell>
    <AppCell $mark="dot">
      <svg width="30" height="28" viewBox="0 0 30 28">
        <path d="M0 3q0-2 2-2h8l3 3h12v6H0z" fill="#d9960c" />
        <path d="M0 7h12l2-2h14q2 0 2 2v19q0 1-1 1H1q-1 0-1-1z" fill="#fdc937" />
        <path d="M5 27v-5q0-2 2-2h16q2 0 2 2v5z" fill="#1477cf" />
        <path d="M10 24h10" stroke="#0a4f94" strokeWidth="1.500" />
      </svg>
    </AppCell>
    <AppCell>
      <svg width="30" height="26" viewBox="0 0 30 26">
        <path d="M0 13l5-5 8 8-1 9z" fill="#1d57b8" />
        <path d="M7.500 20L25 1l5 5-18 20z" fill="#3b9cea" />
      </svg>
    </AppCell>
    <AppCell $mark="on">
      <ActiveTile><CocCoc s={29} /></ActiveTile>
    </AppCell>
    <AppCell $mark="dot">
      <svg width="24" height="24" viewBox="0 0 24 24">
        <rect width="24" height="24" rx="5" fill="#062a30" />
        <circle cx="14" cy="15.500" r="7" fill="#8fd0cc" />
        <circle cx="12" cy="5" r="2.800" fill="#8fd0cc" />
        <circle cx="4.800" cy="8" r="2.800" fill="#8fd0cc" />
      </svg>
    </AppCell>
    <Tray>
      <Cell $w={40}><Chevron up w={15} sw={1.7} /></Cell>
      <Cell $w={40}><VTile>V</VTile></Cell>
      <Cell $w={56}><Lng>ENG</Lng></Cell>
      <Cell $w={36}>
        <Line w={22} h={21} c="#1b1b1b" sw={1.5}>
          <path d="M14 1H3a2 2 0 00-2 2v11a2 2 0 002 2h12M6 19.500h8M7 16v3M12.500 16v3" />
          <path d="M16 1h5v5q0 2-2.500 2T16 6zM16 4h5M18.500 8v11" />
        </Line>
      </Cell>
      <Cell $w={26}>
        <Line w={20} h={18} c="#1b1b1b" sw={1.4}>
          <path d="M1 6.500h3L9 2v14l-5-4.500H1zM11.500 6q2 3 0 6" />
          <path d="M14 4q3.500 5 0 10M16.500 2q5 7 0 14" stroke="#a8a8a8" />
        </Line>
      </Cell>
      <Cell $w={34}>
        <Line w={20} h={16} c="#1b1b1b" sw={1.5}>
          <rect x="1" y="4.500" width="16" height="10.500" rx="2.500" />
          <rect x="3.500" y="7" width="11" height="5.500" fill="#1b1b1b" />
          <path d="M19 8v3" strokeWidth="2" />
          <path d="M4.500 0L1 5.500h3L2.500 9.500 7.500 4H4.800z" fill="#1b1b1b" stroke="#dcdcdc" strokeWidth=".6" />
        </Line>
      </Cell>
      <Clock>10:10 CH<br />25/05/2023</Clock>
      <Cell $w={40}>
        <svg width="18" height="19" viewBox="0 0 18 19">
          <path d="M2 14V8a6 6 0 0112 0v6l2 1.500H0zM5.500 17h5q-2.500 3-5 0z" fill="#1b1b1b" />
          <path d="M5.500 7h4l-4 5h4" fill="none" stroke="#dcdcdc" strokeWidth="1.300" />
          <path d="M11 0h7v6h-5z" fill="#dcdcdc" />
          <path d="M12.500 1h4l-4 4.500h4" fill="none" stroke="#1b1b1b" strokeWidth="1.300" />
        </svg>
      </Cell>
    </Tray>
  </Taskbar>
);

export default function App() {
  return (
    <Screen>
      <Global />
      <BrowserChrome />
      <WikiPage />
      <TaskbarView />
    </Screen>
  );
}
